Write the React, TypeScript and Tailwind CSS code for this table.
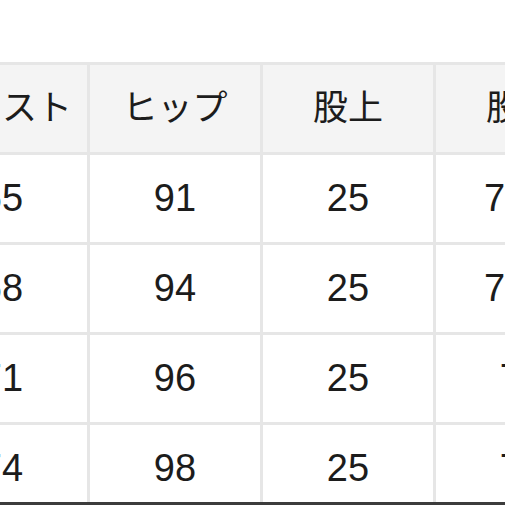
import React from 'react'

const headers = ['ウエスト', 'ヒップ', '股上', '股下']

const rows = [
  ['65', '91', '25', '76.5'],
  ['68', '94', '25', '77.5'],
  ['71', '96', '25', '77'],
  ['74', '98', '25', '77'],
]

export default function App() {
  return (
    <div className="relative h-[505px] w-[505px] overflow-hidden bg-white text-[#1c1c1c] [font-family:'Liberation_Sans','Noto_Sans_CJK_JP',sans-serif]">
      <div className="pt-[62px]">
        {/* Size table, cropped on both sides */}
        <table className="ml-[-86px] border-collapse">
          <thead>
            <tr>
              {headers.map((h) => (
                <th
                  key={h}
                  className="h-[90px] w-[173px] min-w-[173px] border-[3px] border-[#e6e6e6] bg-[#f4f4f4] p-0 text-center text-[35px] font-normal whitespace-nowrap"
                >
                  {h}
                </th>
              ))}
            </tr>
          </thead>
          <tbody>
            {rows.map((row, i) => (
              <tr key={i}>
                {row.map((v, j) => (
                  <td
                    key={j}
                    className="h-[90px] w-[173px] min-w-[173px] border-[3px] border-[#e6e6e6] bg-white p-0 text-center text-[38px] whitespace-nowrap"
                  >
                    {v}
                  </td>
                ))}
              </tr>
            ))}
          </tbody>
        </table>
      </div>
      <div className="absolute bottom-0 left-0 h-[3px] w-full bg-[#3c3c3c]" />
    </div>
  )
}
